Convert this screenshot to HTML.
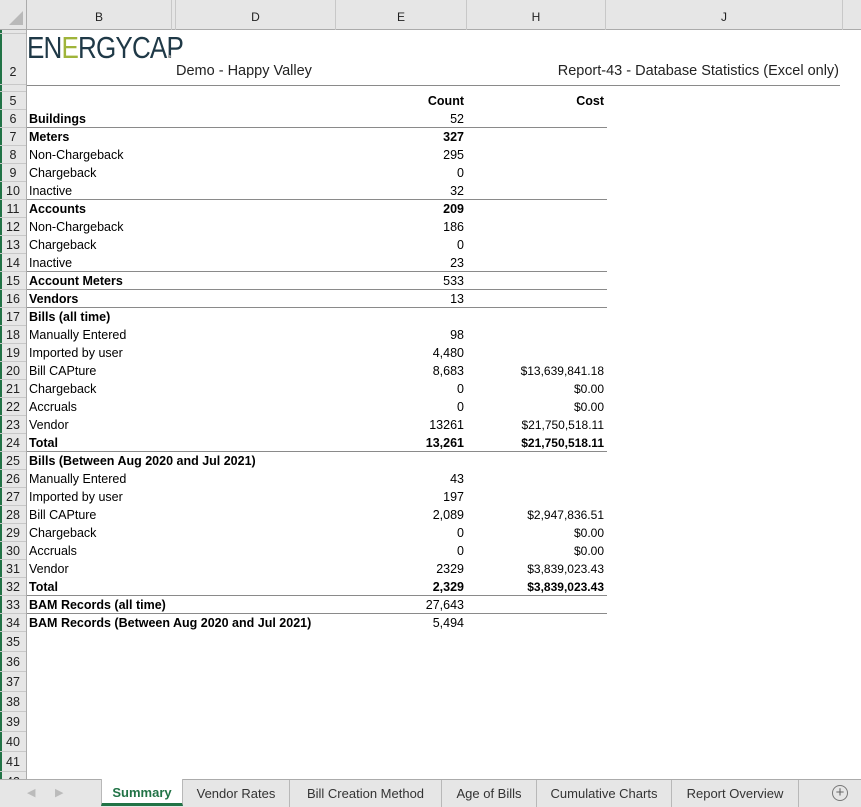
<!DOCTYPE html>
<html><head><meta charset="utf-8"><style>
*{margin:0;padding:0;box-sizing:border-box}
body{width:861px;height:807px;overflow:hidden;background:#fff;font-family:"Liberation Sans",sans-serif;font-size:12.5px;color:#000;position:relative}
.a{position:absolute;white-space:nowrap}
.hdr{position:absolute;left:0;top:0;width:861px;height:30px;background:#e6e6e6;border-bottom:1px solid #ababab}
.col{position:absolute;top:0;height:30px;border-right:1px solid #c8c8c8;text-align:center;line-height:34px;font-size:12px;color:#222}
.rh{position:absolute;left:0;width:27px;background:#e6e6e6;border-right:1px solid #ababab}
.rn{position:absolute;left:0;width:26px;text-align:center;font-size:12.5px;border-bottom:1px solid #c8c8c8;color:#222}
.c{position:absolute;height:18px;line-height:18px}
.b{font-weight:bold}
.ln{position:absolute;left:27px;width:580px;height:1px;background:#8a8a8a}
.tabs{position:absolute;left:0;top:779px;width:861px;height:28px;background:#e6e6e6;border-top:1px solid #ababab}
.tab{position:absolute;top:0;height:27px;line-height:27px;font-size:13px;color:#333;text-align:center;border-right:1px solid #b8b8b8}
</style></head><body>
<div class="hdr">
 <div class="col" style="left:0;width:27px;border-right:1px solid #ababab"><div style="position:absolute;left:9px;top:11px;width:0;height:0;border-left:14px solid transparent;border-bottom:14px solid #b9b9b9"></div></div>
 <div class="col" style="left:27px;width:145px">B</div>
 <div class="col" style="left:172px;width:4px"></div>
 <div class="col" style="left:176px;width:160px">D</div>
 <div class="col" style="left:336px;width:131px">E</div>
 <div class="col" style="left:467px;width:139px">H</div>
 <div class="col" style="left:606px;width:237px">J</div>
</div>
<div class="rh" style="top:30px;height:749px"></div>
<div style="position:absolute;left:0;top:30px;width:2px;height:777px;background:#217346"></div>
<div id="rows"></div>
<!-- logo -->
<div class="a" style="left:27px;top:30px;font-size:31px;font-weight:normal;color:#1f3947;letter-spacing:-1px;transform:scaleX(0.84);transform-origin:left top;line-height:36px">E<span>N</span><span style="color:#9fb43a">E</span>RGYCAP</div>
<div class="a" style="left:168px;top:55px;width:3px;height:3px;border-radius:2px;background:#999"></div>
<div class="a" style="left:176px;top:63px;font-size:14.5px;color:#222">Demo - Happy Valley</div>
<div class="a" style="left:500px;width:339px;text-align:right;top:63px;font-size:14.5px;color:#222">Report-43 - Database Statistics (Excel only)</div>
<div class="a" style="left:27px;top:85px;width:813px;height:1px;background:#8a8a8a"></div>
<div id="cells"></div>
<div class="tabs">
 <div class="a" style="left:27px;top:6px;color:#bbb;font-size:11px">&#9664;</div>
 <div class="a" style="left:55px;top:6px;color:#bbb;font-size:11px">&#9654;</div>
 <div class="tab" style="left:101px;width:82px;background:#fff;top:-1px;height:27px;border-left:1px solid #b8b8b8;color:#217346;font-weight:bold;border-bottom:3px solid #217346">Summary</div>
 <div class="tab" style="left:183px;width:107px">Vendor Rates</div>
 <div class="tab" style="left:290px;width:152px">Bill Creation Method</div>
 <div class="tab" style="left:442px;width:95px">Age of Bills</div>
 <div class="tab" style="left:537px;width:135px">Cumulative Charts</div>
 <div class="tab" style="left:672px;width:127px">Report Overview</div>
 <div class="a" style="left:832px;top:5px;width:16px;height:16px;border:1px solid #777;border-radius:50%;text-align:center;line-height:13px;font-size:15px;color:#666">+</div>
</div>
<script>
var R=document.getElementById('rows'),h='';
h+='<div class="rn" style="top:30px;height:4px"></div>';
h+='<div class="rn" style="top:34px;height:51px;line-height:76px">2</div>';
h+='<div class="rn" style="top:85px;height:7px"></div>';
for(var r=5;r<=34;r++){var t=92+(r-5)*18;h+='<div class="rn" style="top:'+t+'px;height:18px;line-height:18px">'+r+'</div>';}
for(var r=35;r<=42;r++){var t=632+(r-35)*20;h+='<div class="rn" style="top:'+t+'px;height:20px;line-height:21px">'+r+'</div>';}
R.innerHTML=h;
var d=[[5,'', 'Count','Cost',1],
[6,'Buildings','52','',2],[7,'Meters','327','',1],[8,'Non-Chargeback','295',''],[9,'Chargeback','0',''],[10,'Inactive','32',''],
[11,'Accounts','209','',1],[12,'Non-Chargeback','186',''],[13,'Chargeback','0',''],[14,'Inactive','23',''],
[15,'Account Meters','533','',2],[16,'Vendors','13','',2],[17,'Bills (all time)','','',2],
[18,'Manually Entered','98',''],[19,'Imported by user','4,480',''],[20,'Bill CAPture','8,683','$13,639,841.18'],[21,'Chargeback','0','$0.00'],[22,'Accruals','0','$0.00'],[23,'Vendor','13261','$21,750,518.11'],[24,'Total','13,261','$21,750,518.11',1],
[25,'Bills (Between Aug 2020 and Jul 2021)','','',2],[26,'Manually Entered','43',''],[27,'Imported by user','197',''],[28,'Bill CAPture','2,089','$2,947,836.51'],[29,'Chargeback','0','$0.00'],[30,'Accruals','0','$0.00'],[31,'Vendor','2329','$3,839,023.43'],[32,'Total','2,329','$3,839,023.43',1],
[33,'BAM Records (all time)','27,643','',2],[34,'BAM Records (Between Aug 2020 and Jul 2021)','5,494','',2]];
var lines=[6,10,14,15,16,24,32,33],c='';
d.forEach(function(x){var t=92+(x[0]-5)*18;var B=x[4]?' b':'';var nb=(x[4]==1)?' b':'';
c+='<div class="c'+B+'" style="left:29px;top:'+t+'px">'+x[1]+'</div>';
c+='<div class="c'+nb+'" style="left:336px;width:128px;text-align:right;top:'+t+'px">'+x[2]+'</div>';
c+='<div class="c'+nb+'" style="left:467px;width:137px;text-align:right;top:'+t+'px;font-size:'+(x[0]==5?12.5:12)+'px">'+x[3]+'</div>';});
lines.forEach(function(r){c+='<div class="ln" style="top:'+(92+(r-5)*18+17)+'px"></div>';});
document.getElementById('cells').innerHTML=c;
</script>
</body></html>
